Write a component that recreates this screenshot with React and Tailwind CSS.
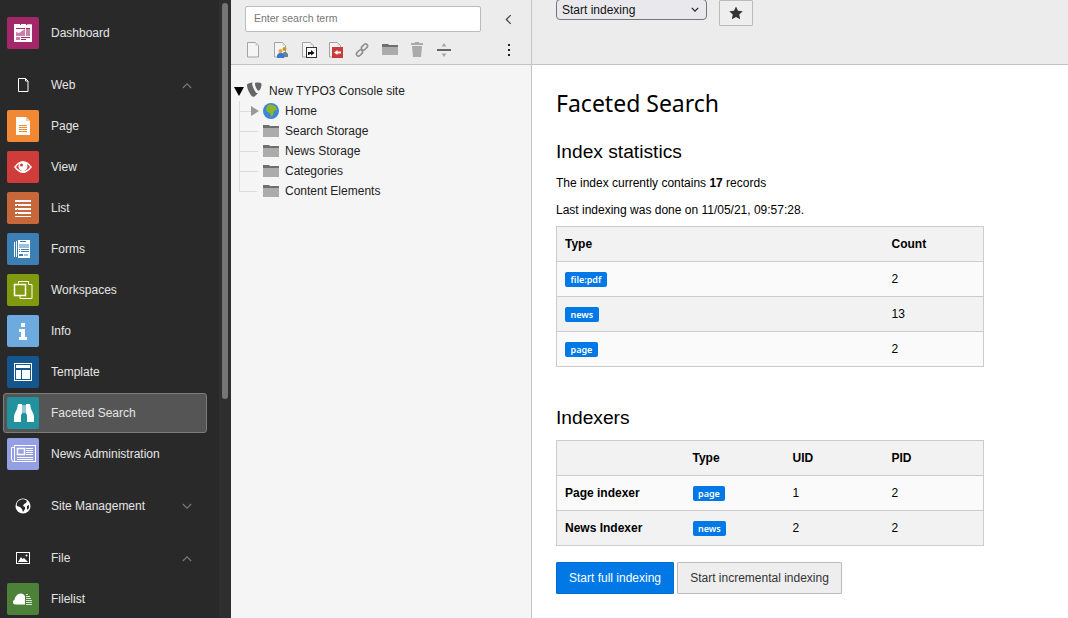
import React from "react";

const sans = "font-['Liberation_Sans',Arial,sans-serif]";

// module icons, all on a 32x32 grid
function DashboardIcon() {
  return (
    <svg viewBox="0 0 32 32" className="w-8 h-8">
      <rect x="7" y="8" width="18" height="17" fill="#fff" />
      <rect x="7" y="7" width="6" height="1" fill="#fff" />
      <rect x="14" y="7" width="5" height="1" fill="#fff" />
      <rect x="20" y="7" width="5" height="1" fill="#e6b9d1" />
      <path fill="#a4276a" d="M9 11h9v1H9z" />
      <path fill="#c97fa8" d="M9 15l3 1 3-2 3-2v7H9z" />
      <rect x="19" y="11" width="4" height="1" fill="#a4276a" />
      <rect x="19" y="12" width="4" height="7" fill="#c97fa8" />
      <rect x="9" y="20" width="4" height="3" fill="#c97fa8" />
      <rect x="14" y="20" width="9" height="1" fill="#a4276a" />
      <rect x="14" y="22" width="5" height="1" fill="#a4276a" />
    </svg>
  );
}

function PageIcon() {
  return (
    <svg viewBox="0 0 32 32" className="w-8 h-8">
      <path fill="#fff" d="M9 7h10l4 4v14H9z" />
      <path fill="#f8c49a" d="M19 7l4 4h-4z" />
      <path stroke="#f18834" d="M12 15.500h8M12 17.500h8M12 19.500h8M12 21.500h8" />
    </svg>
  );
}

function ViewIcon() {
  return (
    <svg viewBox="0 0 32 32" className="w-8 h-8">
      <path fill="#fff" d="M7 16c3-4 6-6 9-6s6 2 9 6c-3 4-6 6-9 6s-6-2-9-6z" />
      <path fill="#d03c3a" d="M9 16c2-2.500 4-4 7-4s5 1.500 7 4c-2 2.500-4 4-7 4s-5-1.500-7-4z" />
      <circle cx="16" cy="15.500" r="4.500" fill="#fff" />
      <circle cx="14.500" cy="14" r="1.500" fill="#d03c3a" />
    </svg>
  );
}

function ListIcon() {
  return (
    <svg viewBox="0 0 32 32" className="w-8 h-8">
      <path fill="#fff" d="M8 8h16v2H8zM8 12h16v2H8zM8 16h16v2H8zM8 20h16v2H8zM8 24h16v1H8z" />
      <path fill="#c8673a" d="M10 13h1v1h-1zM10 17h1v1h-1zM10 21h1v1h-1z" />
    </svg>
  );
}

function FormsIcon() {
  return (
    <svg viewBox="0 0 32 32" className="w-8 h-8">
      <path fill="#fff" d="M7 9h1v15H7zM9 8h1v16H9zM11 7h12v18H11z" />
      <rect x="12" y="11" width="10" height="4" fill="#9dc0dc" />
      <path stroke="#3c7fb5" d="M13 8.500h6M12 16.500h1M14 16.500h8M12 18.500h1M14 18.500h8" />
      <rect x="12" y="21" width="4" height="2" fill="#3c7fb5" />
      <rect x="17" y="21" width="4" height="2" fill="#9dc0dc" />
    </svg>
  );
}

function WorkspacesIcon() {
  return (
    <svg viewBox="0 0 32 32" className="w-8 h-8" fill="none" stroke="#fff">
      <path d="M11.500 9.500V7.500h10v3M21.500 10.500h3.500v14h-12v-3" />
      <rect x="7.500" y="10.500" width="11" height="11" strokeWidth="1.500" />
    </svg>
  );
}

function InfoIcon() {
  return (
    <svg viewBox="0 0 32 32" className="w-8 h-8" fill="#fff">
      <rect x="14" y="8" width="4" height="4" />
      <path d="M12 14h6v8h2v3h-8v-3h2v-5h-2z" />
    </svg>
  );
}

function TemplateIcon() {
  return (
    <svg viewBox="0 0 32 32" className="w-8 h-8" fill="none" stroke="#fff">
      <rect x="7.500" y="7.500" width="17" height="17" />
      <rect x="9" y="9" width="14" height="3" fill="#fff" stroke="none" />
      <rect x="9" y="14" width="5" height="9" fill="#fff" stroke="none" />
      <rect x="15" y="14" width="8" height="9" fill="#fff" stroke="none" />
    </svg>
  );
}

function BinocularsIcon() {
  return (
    <svg viewBox="0 0 32 32" className="w-8 h-8" fill="#fff">
      <rect x="14" y="8" width="6" height="8" fill="#8fcbd1" />
      <path d="M11 7h4v9.500c-.6.500-1 1.500-1 2.500v6H7v-5c0-3 2-6 3-8z" />
      <path d="M23 7h-4v9.500c.6.500 1 1.500 1 2.500v6h7v-5c0-3-2-6-3-8z" />
    </svg>
  );
}

function NewsIcon() {
  return (
    <svg viewBox="0 0 32 32" className="w-8 h-8" fill="none" stroke="#fff">
      <rect x="7.500" y="7.500" width="21" height="16" fill="#959fe3" />
      <path d="M7.500 9.500h-3v11.500l1 2.500h2" />
      <rect x="10.500" y="10.500" width="7" height="6" strokeWidth="1.500" />
      <path d="M19 10.500h7M19 12.500h7M19 14.500h7M19 16.500h7M10 19.500h16M10 21.500h16" />
    </svg>
  );
}

function FilelistIcon() {
  return (
    <svg viewBox="0 0 32 32" className="w-8 h-8" fill="none">
      <path fill="#fff" d="M7 21c-1.500-.5-1.500-3.500.5-4 .5-3.500 3-6.500 6-6.500 2.500 0 4.500 1.500 4.500 3.500v7.500H8z" />
      <path stroke="#fff" strokeWidth=".8" d="M19 11.500h2M19 13.500h4M19 15.500h5M19 17.500h6M19 19.500h6M19 21.500h6" />
    </svg>
  );
}

function Chevron({ up }) {
  return (
    <svg viewBox="0 0 12 8" className="w-[10px] h-[7px]" fill="none" stroke="#7a7a7a" strokeWidth="1.300">
      <path d={up ? "M1 7l5-5 5 5" : "M1 1l5 5 5-5"} />
    </svg>
  );
}

function ModuleRow({ label, bg, icon, active }) {
  if (active) {
    return (
      <div className="h-[41px] pt-px">
        <div className="h-10 mx-[3px] w-[204px] flex items-center rounded-[3px] border border-[#7c7c7c] bg-[#555555] pl-[3px]">
          <div className={`w-8 h-8 rounded-[2px] flex items-center justify-center overflow-hidden ${bg}`}>{icon}</div>
          <span className="ml-3 text-xs text-[#e5e5e5]">{label}</span>
        </div>
      </div>
    );
  }
  return (
    <div className="h-[41px] pl-[7px] pt-[5px] flex items-start">
      <div className={`w-8 h-8 rounded-[2px] flex items-center justify-center overflow-hidden ${bg}`}>{icon}</div>
      <span className="ml-3 h-8 leading-8 text-xs text-[#e5e5e5]">{label}</span>
    </div>
  );
}

function GroupRow({ label, icon, up }) {
  return (
    <div className="h-[41px] pl-[7px] pt-[5px] flex items-start w-[219px]">
      <div className="w-8 h-8 flex items-center justify-center">{icon}</div>
      <span className="ml-3 h-8 leading-8 text-xs text-[#e5e5e5]">{label}</span>
      <div className="ml-auto mr-[27px] h-8 flex items-center">
        <Chevron up={up} />
      </div>
    </div>
  );
}

function Sidebar() {
  return (
    <aside className={`w-[231px] shrink-0 h-[618px] bg-[#292929] flex ${sans}`}>
      <nav className="w-[219px] pt-3">
        <ModuleRow label="Dashboard" bg="bg-[#a4276a]" icon={<DashboardIcon />} />
        <div className="mt-[11px]">
          <GroupRow
            label="Web"
            up
            icon={
              <svg viewBox="0 0 16 16" className="w-4 h-4" fill="none" stroke="#fff">
                <path d="M3.500 1.500h7l2.500 2.500v10.500h-9.500zM10.500 1.500v2.500h2.500" />
              </svg>
            }
          />
          <ModuleRow label="Page" bg="bg-[#f18834]" icon={<PageIcon />} />
          <ModuleRow label="View" bg="bg-[#d03c3a]" icon={<ViewIcon />} />
          <ModuleRow label="List" bg="bg-[#c8673a]" icon={<ListIcon />} />
          <ModuleRow label="Forms" bg="bg-[#3c7fb5]" icon={<FormsIcon />} />
          <ModuleRow label="Workspaces" bg="bg-[#7f9a0f]" icon={<WorkspacesIcon />} />
          <ModuleRow label="Info" bg="bg-[#6daae0]" icon={<InfoIcon />} />
          <ModuleRow label="Template" bg="bg-[#16568f]" icon={<TemplateIcon />} />
          <ModuleRow label="Faceted Search" bg="bg-[#22939e]" icon={<BinocularsIcon />} active />
          <ModuleRow label="News Administration" bg="bg-[#959fe3]" icon={<NewsIcon />} />
        </div>
        <div className="mt-[11px]">
          <GroupRow
            label="Site Management"
            icon={
              <svg viewBox="0 0 16 16" className="w-4 h-4">
                <circle cx="8" cy="8" r="7.500" fill="#fff" />
                <path fill="#292929" d="M5 2c2-1 5-1 7 1l-1 2-2 1-1 2 2 1v2l-2 3-1-3-2-2-3-1c-1-3 1-5 3-6z" />
                <path fill="#292929" d="M12 8l2-1 0 3-2 2z" />
              </svg>
            }
          />
        </div>
        <div className="mt-[11px]">
          <GroupRow
            label="File"
            up
            icon={
              <svg viewBox="0 0 16 16" className="w-4 h-4">
                <rect x="1.500" y="2.500" width="13" height="11" fill="#292929" stroke="#fff" />
                <circle cx="11.500" cy="5.500" r="1" fill="#fff" />
                <path fill="#fff" d="M3 12l3-5 1.500 2 1.500-1 4 4z" />
              </svg>
            }
          />
          <ModuleRow label="Filelist" bg="bg-[#4d8038]" icon={<FilelistIcon />} />
        </div>
      </nav>
      <div className="flex-1 bg-[#2f2f2f] pt-[3px] pl-[3px]">
        <div className="w-[6px] h-[396px] rounded-full bg-[#757575]" />
      </div>
    </aside>
  );
}

function DocShape({ x = 1, children }) {
  return (
    <svg viewBox="0 0 16 16" className="w-4 h-4" fill="none">
      <g transform={`translate(${x} 0)`}>
        <path d="M.5 .5h8l3 3v11.500h-11z" fill="#f5f5f5" stroke="#a3a3a3" />
        <path d="M8.500 .5l3 3h-3z" fill="#d0d0d0" />
      </g>
      {children}
    </svg>
  );
}

function Toolbar() {
  return (
    <div className="flex items-center pl-[14px] h-4 gap-3">
      <DocShape x={2} />
      <DocShape>
        <circle cx="11.500" cy="7" r="2" fill="#c9962f" />
        <path d="M9 15v-3l2-2h2l2 2v3z" fill="#6a7f9a" />
        <circle cx="7.500" cy="9" r="2" fill="#e8a33d" />
        <path d="M4 16v-3l2-2h3l2 2v3z" fill="#3a78d0" />
      </DocShape>
      <DocShape>
        <rect x="5.500" y="5.500" width="10" height="10" fill="#fff" stroke="#333" />
        <path d="M7 13v-3h3V8l3.500 3-3.500 2.500V12H8.500v1z" fill="#111" />
      </DocShape>
      <DocShape x={0}>
        <rect x="3" y="5" width="11" height="11" fill="#c83c3c" />
        <path d="M5 10.500l3.500-2.500v1.500H12v2H8.500V13z" fill="#fff" />
      </DocShape>
      <svg viewBox="0 0 16 16" className="w-4 h-4 -ml-[3px]" fill="none" stroke="#8c8c8c" strokeWidth="1.500">
        <rect x="8.500" y="1.500" width="4" height="7" rx="2" transform="rotate(45 10.500 5)" />
        <rect x="3.500" y="7.500" width="4" height="7" rx="2" transform="rotate(45 5.500 11)" />
      </svg>
      <svg viewBox="0 0 16 16" className="w-4 h-4">
        <path d="M0 2h6l1 1h9v2H0z" fill="#6e6e6e" />
        <rect y="5" width="16" height="8" fill="#ababab" />
      </svg>
      <svg viewBox="0 0 16 16" className="w-4 h-4 -ml-[1px]" fill="#aaa">
        <path d="M6 0h4v1h4v2H2V1h4zM3 4h10l-1 11H4z" />
      </svg>
      <svg viewBox="0 0 16 16" className="w-4 h-4 -ml-[1px]">
        <rect x="1" y="7" width="14" height="2" fill="#666" />
        <path d="M8 1l2.500 3.500h-5zM8 15l-2.500-3.500h5z" fill="#aaa" />
      </svg>
      <div className="ml-auto mr-[21px] flex flex-col gap-[3px]">
        <span className="w-[2px] h-[2px] bg-[#222]" />
        <span className="w-[2px] h-[2px] bg-[#222]" />
        <span className="w-[2px] h-[2px] bg-[#222]" />
      </div>
    </div>
  );
}

function FolderIcon() {
  return (
    <svg viewBox="0 0 16 12" className="w-4 h-3">
      <path d="M0 0h6l1 1h9v2H0z" fill="#6e6e6e" />
      <rect y="3" width="16" height="9" fill="#ababab" />
    </svg>
  );
}

function TreeRow({ label, last, children }) {
  return (
    <div className="h-5 flex items-center">
      <div className={`w-6 h-5 shrink-0 ${last ? "" : "border-l border-[#dcdcdc]"}`}>
        <div className={`h-[11px] w-[18px] border-b border-[#dcdcdc] ${last ? "border-l" : ""}`} />
      </div>
      {children}
      <span className="ml-[6px] text-xs text-[#222]">{label}</span>
    </div>
  );
}

function PageTree() {
  return (
    <section className={`w-[301px] shrink-0 h-[618px] bg-[#f5f5f5] border-r border-[#c3c3c3] ${sans}`}>
      <div className="h-[65px] bg-[#ececec] border-b border-[#c3c3c3] pt-[6px]">
        <div className="flex items-center pl-[14px]">
          <div className="w-[236px] h-[26px] bg-white border border-[#bbbbbb] rounded-[2px] pl-2 flex items-center text-[10.5px] text-[#777]">
            Enter search term
          </div>
          <svg viewBox="0 0 8 12" className="w-[7px] h-[11px] ml-[24px]" fill="none" stroke="#444" strokeWidth="1.400">
            <path d="M6.500 1l-5 5 5 5" />
          </svg>
        </div>
        <div className="mt-[10px]">
          <Toolbar />
        </div>
      </div>
      <div className="pt-4 pl-[3px]">
        <div className="h-5 flex items-center">
          <svg viewBox="0 0 10 9" className="w-[10px] h-[9px]">
            <path d="M0 0h10L5 9z" fill="#000" />
          </svg>
          <svg viewBox="0 0 16 16" className="w-4 h-4 ml-[3px] -mt-[2px]" fill="#666">
            <path d="M11 11c-.3.100-.5.100-.8.100-2 0-5-7-5-9.300 0-.8.200-1.100.5-1.300C3 .8 .9 1.400 .2 2.300 0 2.500 0 2.900 0 3.300c0 3.500 3.700 11.500 6.300 11.500 1.200 0 3.300-2 4.700-3.800z" />
            <path d="M9.800 .5c2.400 0 4.800.4 4.800 1.800 0 2.900-1.800 6.400-2.800 6.400-1.700 0-3.800-4.700-3.800-7 0-1 .4-1.200 1.800-1.200z" />
          </svg>
          <span className="ml-[6px] text-xs text-[#222]">New TYPO3 Console site</span>
        </div>
        <div className="pl-[5px]">
          <TreeRow label="Home">
            <svg viewBox="0 0 16 16" className="w-4 h-4 overflow-visible">
              <path d="M-12 3l8 5-8 5z" fill="#999" />
              <circle cx="8" cy="8" r="8" fill="#3d86d6" />
              <path d="M5 2c3-1 6 0 8 2l1 3-3 1-1 4-2 2-1-4-3-1-1-3z" fill="#8db62a" />
            </svg>
          </TreeRow>
          <TreeRow label="Search Storage"><FolderIcon /></TreeRow>
          <TreeRow label="News Storage"><FolderIcon /></TreeRow>
          <TreeRow label="Categories"><FolderIcon /></TreeRow>
          <TreeRow label="Content Elements" last><FolderIcon /></TreeRow>
        </div>
      </div>
    </section>
  );
}

function Tag({ children }) {
  return (
    <span className="inline-block h-[15px] leading-[15px] px-[5.5px] rounded-[2px] bg-[#0078e6] text-white text-[9px] font-semibold font-['Noto_Sans',sans-serif]">
      {children}
    </span>
  );
}

const cellBase = "h-[35px] px-2 text-xs border-t border-[#cccccc] align-middle text-left";

function StatsTable() {
  const rows = [
    { type: "file:pdf", count: 2 },
    { type: "news", count: 13 },
    { type: "page", count: 2 },
  ];
  return (
    <table className="w-[428px] table-fixed border border-[#cccccc] border-collapse">
      <colgroup>
        <col className="w-[327px]" />
        <col />
      </colgroup>
      <thead>
        <tr className="bg-[#f2f2f2]">
          <th className={cellBase}>Type</th>
          <th className={cellBase}>Count</th>
        </tr>
      </thead>
      <tbody>
        {rows.map((r, i) => (
          <tr key={r.type} className={i % 2 ? "bg-[#f2f2f2]" : "bg-[#fafafa]"}>
            <td className={cellBase}><Tag>{r.type}</Tag></td>
            <td className={cellBase}>{r.count}</td>
          </tr>
        ))}
      </tbody>
    </table>
  );
}

function IndexersTable() {
  const rows = [
    { name: "Page indexer", type: "page", uid: 1, pid: 2 },
    { name: "News Indexer", type: "news", uid: 2, pid: 2 },
  ];
  return (
    <table className="w-[428px] table-fixed border border-[#cccccc] border-collapse">
      <colgroup>
        <col className="w-[128px]" />
        <col className="w-[100px]" />
        <col className="w-[99px]" />
        <col />
      </colgroup>
      <thead>
        <tr className="bg-[#f2f2f2]">
          <th className={cellBase}></th>
          <th className={cellBase}>Type</th>
          <th className={cellBase}>UID</th>
          <th className={cellBase}>PID</th>
        </tr>
      </thead>
      <tbody>
        {rows.map((r, i) => (
          <tr key={r.name} className={i % 2 ? "bg-[#f2f2f2]" : "bg-[#fafafa]"}>
            <td className={`${cellBase} font-bold`}>{r.name}</td>
            <td className={cellBase}><Tag>{r.type}</Tag></td>
            <td className={cellBase}>{r.uid}</td>
            <td className={cellBase}>{r.pid}</td>
          </tr>
        ))}
      </tbody>
    </table>
  );
}

function MainPanel() {
  return (
    <main className={`flex-1 h-[618px] bg-white ${sans} text-black overflow-hidden`}>
      <div className="h-[65px] bg-[#ececec] border-b border-[#c3c3c3] pl-6 flex items-start gap-3">
        <div className="w-[151px] h-[21px] -mt-px bg-[#e9e9ed] border border-[#767676] rounded-[4px] pl-[5px] pr-[7px] flex items-center justify-between text-xs text-[#111]">
          Start indexing
          <svg viewBox="0 0 10 6" className="w-[8px] h-[5px]" fill="none" stroke="#222" strokeWidth="1.500">
            <path d="M1 1l4 4 4-4" />
          </svg>
        </div>
        <div className="w-[34px] h-[26px] bg-[#eeeeee] border border-[#bbbbbb] rounded-[1px] flex items-center justify-center">
          <svg viewBox="0 0 16 16" className="w-[14px] h-[14px]" fill="#333">
            <path d="M8 .5l2.300 5 5.400.6-4 3.700 1.100 5.400L8 12.500l-4.800 2.700 1.100-5.400-4-3.700 5.400-.6z" />
          </svg>
        </div>
      </div>
      <div className="pl-6 pt-[22px]">
        <h1 className="text-[23px] leading-[33px] font-['Noto_Sans',sans-serif]">Faceted Search</h1>
        <h2 className="mt-[19px] text-[19.2px] leading-[25px]">Index statistics</h2>
        <p className="mt-[10px] text-xs leading-[18px]">
          The index currently contains <b>17</b> records
        </p>
        <p className="mt-[9px] text-xs leading-[18px]">Last indexing was done on 11/05/21, 09:57:28.</p>
        <div className="mt-[7px]">
          <StatsTable />
        </div>
        <h2 className="mt-[38px] text-[19.2px] leading-[25px]">Indexers</h2>
        <div className="mt-[10px]">
          <IndexersTable />
        </div>
        <div className="mt-4 flex gap-[3px]">
          <button className="h-[32px] w-[118px] bg-[#0078e6] border border-[#006ccf] rounded-[1px] text-xs text-white">
            Start full indexing
          </button>
          <button className="h-[32px] w-[165px] bg-[#eeeeee] border border-[#bbbbbb] rounded-[1px] text-xs text-[#333]">
            Start incremental indexing
          </button>
        </div>
      </div>
    </main>
  );
}

export default function App() {
  return (
    <div className="flex w-[1068px] h-[618px] overflow-hidden">
      <Sidebar />
      <PageTree />
      <MainPanel />
    </div>
  );
}
